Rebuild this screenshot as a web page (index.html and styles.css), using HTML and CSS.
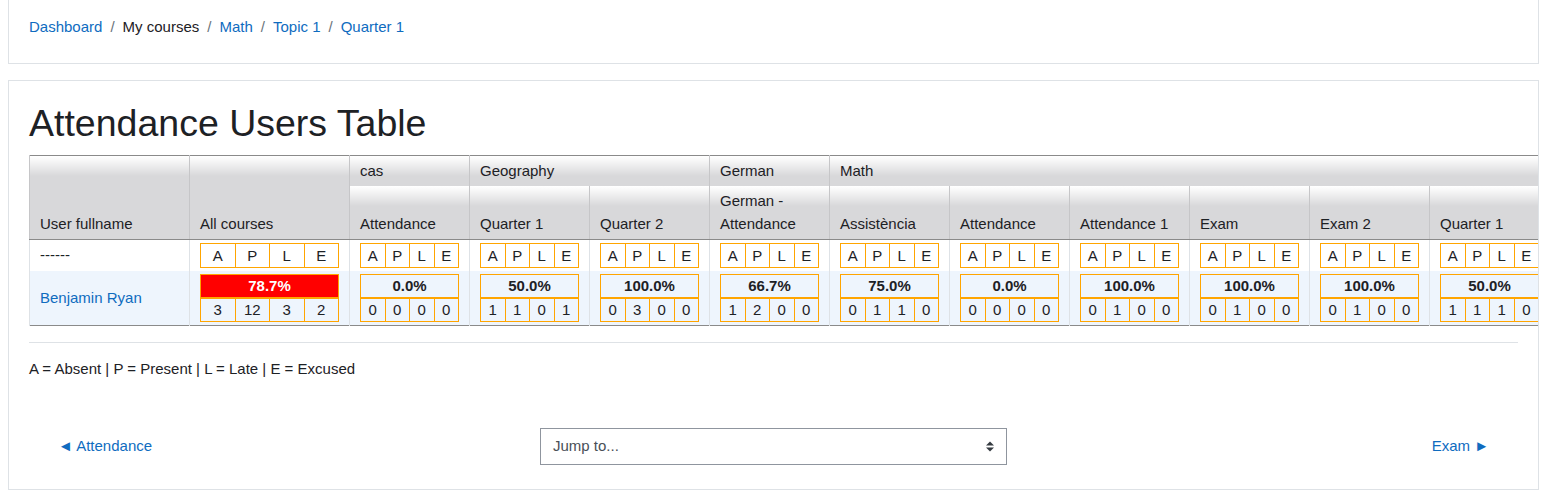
FILE: index.html
```html
<!DOCTYPE html>
<html lang="en">
<head>
<meta charset="utf-8">
<title>Attendance Users Table</title>
<link rel="stylesheet" href="styles.css">
</head>
<body>
<div class="card crumbs">
  <nav class="breadcrumb">
    <a href="#">Dashboard</a><span class="sep">/</span><span class="plain">My courses</span><span class="sep">/</span><a href="#">Math</a><span class="sep">/</span><a href="#">Topic 1</a><span class="sep">/</span><a href="#">Quarter 1</a>
  </nav>
</div>

<div class="card main">
  <h2 class="title">Attendance Users Table</h2>
  <table class="users">
    <colgroup>
      <col class="c-name"><col class="c-all">
      <col class="c-sub"><col class="c-sub"><col class="c-sub"><col class="c-sub"><col class="c-sub">
      <col class="c-sub"><col class="c-sub"><col class="c-sub"><col class="c-sub"><col class="c-sub">
    </colgroup>
    <thead>
      <tr class="grp-row">
        <th rowspan="2" class="tall">User fullname</th>
        <th rowspan="2" class="tall">All courses</th>
        <th class="grp">cas</th>
        <th class="grp" colspan="2">Geography</th>
        <th class="grp">German</th>
        <th class="grp" colspan="6">Math</th>
      </tr>
      <tr class="sub-row">
        <th>Attendance</th>
        <th>Quarter 1</th>
        <th>Quarter 2</th>
        <th>German -<br>Attendance</th>
        <th>Assistència</th>
        <th>Attendance</th>
        <th>Attendance 1</th>
        <th>Exam</th>
        <th>Exam 2</th>
        <th>Quarter 1</th>
      </tr>
    </thead>
    <tbody>
      <tr class="key-row">
        <td>------</td>
        <td><table class="aple"><tr><td>A</td><td>P</td><td>L</td><td>E</td></tr></table></td>
        <td><table class="aple"><tr><td>A</td><td>P</td><td>L</td><td>E</td></tr></table></td>
        <td><table class="aple"><tr><td>A</td><td>P</td><td>L</td><td>E</td></tr></table></td>
        <td><table class="aple"><tr><td>A</td><td>P</td><td>L</td><td>E</td></tr></table></td>
        <td><table class="aple"><tr><td>A</td><td>P</td><td>L</td><td>E</td></tr></table></td>
        <td><table class="aple"><tr><td>A</td><td>P</td><td>L</td><td>E</td></tr></table></td>
        <td><table class="aple"><tr><td>A</td><td>P</td><td>L</td><td>E</td></tr></table></td>
        <td><table class="aple"><tr><td>A</td><td>P</td><td>L</td><td>E</td></tr></table></td>
        <td><table class="aple"><tr><td>A</td><td>P</td><td>L</td><td>E</td></tr></table></td>
        <td><table class="aple"><tr><td>A</td><td>P</td><td>L</td><td>E</td></tr></table></td>
        <td><table class="aple"><tr><td>A</td><td>P</td><td>L</td><td>E</td></tr></table></td>
      </tr>
      <tr class="user-row">
        <td><a href="#">Benjamin Ryan</a></td>
        <td><table class="stats"><tr><td colspan="4" class="pct bad">78.7%</td></tr><tr><td>3</td><td>12</td><td>3</td><td>2</td></tr></table></td>
        <td><table class="stats"><tr><td colspan="4" class="pct">0.0%</td></tr><tr><td>0</td><td>0</td><td>0</td><td>0</td></tr></table></td>
        <td><table class="stats"><tr><td colspan="4" class="pct">50.0%</td></tr><tr><td>1</td><td>1</td><td>0</td><td>1</td></tr></table></td>
        <td><table class="stats"><tr><td colspan="4" class="pct">100.0%</td></tr><tr><td>0</td><td>3</td><td>0</td><td>0</td></tr></table></td>
        <td><table class="stats"><tr><td colspan="4" class="pct">66.7%</td></tr><tr><td>1</td><td>2</td><td>0</td><td>0</td></tr></table></td>
        <td><table class="stats"><tr><td colspan="4" class="pct">75.0%</td></tr><tr><td>0</td><td>1</td><td>1</td><td>0</td></tr></table></td>
        <td><table class="stats"><tr><td colspan="4" class="pct">0.0%</td></tr><tr><td>0</td><td>0</td><td>0</td><td>0</td></tr></table></td>
        <td><table class="stats"><tr><td colspan="4" class="pct">100.0%</td></tr><tr><td>0</td><td>1</td><td>0</td><td>0</td></tr></table></td>
        <td><table class="stats"><tr><td colspan="4" class="pct">100.0%</td></tr><tr><td>0</td><td>1</td><td>0</td><td>0</td></tr></table></td>
        <td><table class="stats"><tr><td colspan="4" class="pct">100.0%</td></tr><tr><td>0</td><td>1</td><td>0</td><td>0</td></tr></table></td>
        <td><table class="stats"><tr><td colspan="4" class="pct">50.0%</td></tr><tr><td>1</td><td>1</td><td>1</td><td>0</td></tr></table></td>
      </tr>
    </tbody>
  </table>

  <hr class="rule">
  <p class="legend">A = Absent | P = Present | L = Late | E = Excused</p>

  <div class="activity-nav">
    <div class="nav-prev"><a href="#">&#9668; Attendance</a></div>
    <div class="jump">
      <span class="jump-text">Jump to...</span>
      <svg class="jump-arrow" width="8" height="11" viewBox="0 0 8 11"><polygon points="0,4.5 4,0.5 8,4.5" fill="#343a40"/><polygon points="0,6.5 4,10.5 8,6.5" fill="#343a40"/></svg>
    </div>
    <div class="nav-next"><a href="#">Exam &#9658;</a></div>
  </div>
</div>
</body>
</html>
```

FILE: styles.css
```css
body {
  margin: 0 11px 0 8px;
  font-family: "Liberation Sans", Arial, sans-serif;
  font-size: 15px;
  line-height: 1.5;
  color: #1d2125;
  background: #fff;
}

a {
  color: #0f6cbf;
  text-decoration: none;
}

.card {
  border: 1px solid #dee2e6;
  background: #fff;
}

.crumbs {
  margin-top: -1px;
  padding: 16px 20px 24px;
}

.breadcrumb .sep {
  padding: 0 8px;
  color: #6a737b;
}

.main {
  margin-top: 16px;
  padding: 20px 20px 24px;
  overflow: hidden;
}

.title {
  margin: 0 0 9px;
  font-size: 37.5px;
  line-height: 45px;
  font-weight: 400;
}

/* main table */
.users {
  border-collapse: collapse;
  table-layout: fixed;
  width: 1520px;
  border: 1px solid #8a8a8a;
}

.c-name, .c-all { width: 160px; }
.c-sub { width: 120px; }

.users > thead > tr > th {
  padding: 4px 10px;
  text-align: left;
  font-weight: 400;
  vertical-align: bottom;
  line-height: 22.5px;
  background-color: #d8d8da;
  background-image: linear-gradient(to bottom, #ffffff 0, #fafafa 3px, #d8d8da 20px);
  background-repeat: no-repeat;
  background-size: 100% 20px;
  border-left: 1px solid #c6c6c8;
}

.users > thead > tr > th.tall,
.users > thead > tr.sub-row > th {
  border-bottom: 1px solid #8a8a8a;
}

.users > tbody > tr > td {
  padding: 3px 10px;
  border-left: 1px solid #dee2e6;
  vertical-align: middle;
}

.users > tbody > tr.user-row > td {
  background: #eef5fd;
}

/* nested boxes */
.aple, .stats {
  width: 100%;
  border-collapse: collapse;
  table-layout: fixed;
}

.aple td, .stats td {
  border: 1px solid #ffa500;
  text-align: center;
  padding: 0;
  color: #1d2125;
}

.aple td {
  line-height: 23px;
}

.stats td {
  line-height: 22px;
}

.stats td.pct {
  font-weight: 700;
  border-bottom-width: 2px;
}

.stats td.pct.bad {
  background: #ff0000;
  color: #fff;
}

/* footer */
.rule {
  margin: 16px 0 15px;
  border: 0;
  border-top: 1px solid #dee2e6;
}

.legend {
  margin: 0;
}

.activity-nav {
  margin-top: 47px;
  display: grid;
  grid-template-columns: 1fr 467px 1fr;
  align-items: center;
}

.nav-prev {
  padding-left: 29px;
}

.nav-next {
  padding-right: 29px;
  text-align: right;
}

.jump {
  position: relative;
  height: 35px;
  border: 1px solid #8f959e;
  display: flex;
  align-items: center;
  padding: 0 12px;
  color: #495057;
}

.jump-text {
  flex: 1;
}

.jump-arrow {
  display: block;
}
```
